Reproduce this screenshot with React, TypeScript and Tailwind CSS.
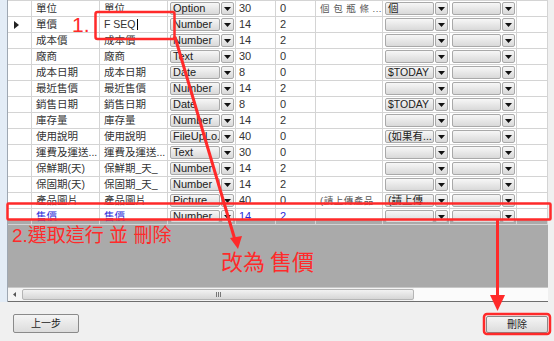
import React from 'react';

type Row = {
  name: string;
  field: string;
  type: string;
  len: string;
  dec: string;
  note?: string;
  def?: string;
  blue?: boolean;
  cursor?: boolean;
  current?: boolean;
};

const rows: Row[] = [
  { name: '單位', field: '單位', type: 'Option', len: '30', dec: '0', note: '個 包 瓶 條 ...', def: '個' },
  { name: '單價', field: 'F SEQ', type: 'Number', len: '14', dec: '2', cursor: true, current: true },
  { name: '成本價', field: '成本價', type: 'Number', len: '14', dec: '2' },
  { name: '廠商', field: '廠商', type: 'Text', len: '30', dec: '0' },
  { name: '成本日期', field: '成本日期', type: 'Date', len: '8', dec: '0', def: '$TODAY' },
  { name: '最近售價', field: '最近售價', type: 'Number', len: '14', dec: '2' },
  { name: '銷售日期', field: '銷售日期', type: 'Date', len: '8', dec: '0', def: '$TODAY' },
  { name: '庫存量', field: '庫存量', type: 'Number', len: '14', dec: '2' },
  { name: '使用說明', field: '使用說明', type: 'FileUpLo...', len: '40', dec: '0', def: '(如果有...' },
  { name: '運費及運送...', field: '運費及運送...', type: 'Text', len: '30', dec: '0' },
  { name: '保鮮期(天)', field: '保鮮期_天_', type: 'Number', len: '14', dec: '2' },
  { name: '保固期(天)', field: '保固期_天_', type: 'Number', len: '14', dec: '2' },
  { name: '產品圖片', field: '產品圖片', type: 'Picture', len: '40', dec: '0', note: '(請上傳產品...', def: '(請上傳...' },
  { name: '售價', field: '售價', type: 'Number', len: '14', dec: '2', blue: true },
];

const cols = 'grid grid-cols-[24px_68px_68px_68px_40px_40px_67px_67px_67px_1fr]';

const Arrow = () => (
  <svg width="7" height="4" viewBox="0 0 7 4">
    <polygon points="0,0 7,0 3.5,4" fill="#111" />
  </svg>
);

const Combo = ({ text }: { text?: string }) => (
  <div className="flex h-full w-full py-[1px] pl-[2px] pr-[1px] gap-[1px]">
    <div className="flex-1 min-w-0 flex items-center px-[2px] overflow-hidden whitespace-nowrap border border-[#a9a9a9] rounded-[2px] bg-linear-to-b from-[#f7f7f7] to-[#d9d9d9] text-[#222]">
      {text}
    </div>
    <div className="w-[13px] flex items-center justify-center border border-[#a9a9a9] rounded-[2px] bg-linear-to-b from-[#f7f7f7] to-[#d9d9d9]">
      <Arrow />
    </div>
  </div>
);

const Cell = ({ children, className = '' }: { children?: React.ReactNode; className?: string }) => (
  <div className={`min-w-0 border-r border-b border-[#d4d4d4] flex items-center overflow-hidden whitespace-nowrap ${className}`}>
    {children}
  </div>
);

export default function App() {
  return (
    <div
      className="w-[554px] h-[341px] relative overflow-hidden bg-[#f0f0f0] text-[11px] leading-none"
      style={{ fontFamily: '"Liberation Sans", "Noto Sans CJK TC", sans-serif' }}
    >
      <div className="flex h-[302px]">
        <div className="w-[8px] bg-[#e3ecf6] border-r border-[#9ea7b2]" />
        <div className="w-[540px] flex flex-col bg-[#aaaaaa]">
          {/* grid */}
          <div className="h-[219px] bg-white flex flex-col">
            <div className={`${cols} h-[3px]`}>
              {Array.from({ length: 10 }).map((_, i) => (
                <div key={i} className="border-r border-b border-[#d4d4d4]" />
              ))}
            </div>
            <div className="flex-1 grid grid-rows-[repeat(14,1fr)]">
              {rows.map((r, i) => {
                const tc = r.blue ? 'text-[#2a2ad8]' : 'text-[#333]';
                return (
                  <div key={i} className={cols}>
                    <Cell className="pl-[6px]">
                      {r.current && (
                        <svg width="5" height="8" viewBox="0 0 5 8">
                          <polygon points="0,0 5,4 0,8" fill="#222" />
                        </svg>
                      )}
                    </Cell>
                    <Cell className={`pl-[4px] text-[10.5px] ${tc}`}>{r.name}</Cell>
                    <Cell className={`pl-[4px] text-[10.5px] ${tc}`}>
                      {r.field}
                      {r.cursor && <span className="ml-[1px] w-[1px] h-[11px] bg-black" />}
                    </Cell>
                    <Cell>
                      <Combo text={r.type} />
                    </Cell>
                    <Cell className={`pl-[3px] ${tc}`}>{r.len}</Cell>
                    <Cell className={`pl-[4px] ${tc}`}>{r.dec}</Cell>
                    <Cell className="pl-[4px] text-[9.5px] text-[#555] tracking-[0.5px]">{r.note}</Cell>
                    <Cell className="text-[10.5px]">
                      <Combo text={r.def} />
                    </Cell>
                    <Cell>
                      <Combo />
                    </Cell>
                    <Cell />
                  </div>
                );
              })}
            </div>
          </div>
          <div className="flex-1" />
          {/* horizontal scrollbar */}
          <div className="h-[15px] flex items-stretch bg-[#f4f4f4] border-t border-[#c8c8c8] border-b border-b-[#6e6e6e]">
            <div className="w-[13px] flex items-center justify-center">
              <svg width="3" height="5" viewBox="0 0 3 5">
                <polygon points="3,0 0,2.5 3,5" fill="#555" />
              </svg>
            </div>
            <div className="w-[392px] my-[1px] ml-[1px] rounded-[2px] border border-[#b5b5b5] bg-linear-to-b from-[#f2f2f2] to-[#d6d6d6] flex items-center justify-center">
              <div className="flex gap-[1px]">
                <div className="w-[1px] h-[5px] bg-[#777]" />
                <div className="w-[1px] h-[5px] bg-[#777]" />
                <div className="w-[1px] h-[5px] bg-[#777]" />
              </div>
            </div>
            <div className="flex-1 bg-[#fbfbfb]" />
          </div>
        </div>
        <div className="flex-1 bg-[#f0f0f0]" />
      </div>

      {/* bottom buttons */}
      <div className="flex justify-between items-start pl-[13px] pr-[6px] pt-[12px]">
        <div className="w-[66px] h-[19px] flex items-center justify-center text-[10px] text-[#222] border border-[#8a8a8a] rounded-[2px] bg-linear-to-b from-[#f5f5f5] to-[#dcdcdc]">
          上一步
        </div>
        <div className="w-[62px] h-[17px] mt-[2px] flex items-center justify-center text-[10px] text-[#222] border border-[#8a8a8a] rounded-[2px] bg-linear-to-b from-[#f5f5f5] to-[#dcdcdc]">
          刪除
        </div>
      </div>

      {/* annotations */}
      <svg className="absolute inset-0 pointer-events-none" width="554" height="341" viewBox="0 0 554 341">
        <rect x="95.5" y="12" width="79" height="27" rx="2" fill="none" stroke="#ff2a2a" strokeWidth="2.5" />
        <rect x="7.5" y="203.5" width="543" height="16" rx="1" fill="none" stroke="#ff2a2a" strokeWidth="2.5" />
        <line x1="175" y1="37" x2="235" y2="240" stroke="#ff2a2a" strokeWidth="3" />
        <polygon points="230,238 242,236 238,249" fill="#ff2a2a" />
        <line x1="497.5" y1="220" x2="497.5" y2="298" stroke="#ff2a2a" strokeWidth="3" />
        <polygon points="490,295 505,295 497.5,311" fill="#ff2a2a" />
        <rect x="484" y="314" width="66" height="20" rx="3" fill="none" stroke="#ff2a2a" strokeWidth="2.5" />
      </svg>
      <div className="absolute left-[72px] top-[14px] text-[21px] text-[#ff2a2a]" style={{ fontFamily: '"Liberation Sans", sans-serif' }}>
        1.
      </div>
      <div
        className="absolute left-[12px] top-[226px] text-[19px] text-[#ff2a2a] whitespace-nowrap"
        style={{ fontFamily: '"Liberation Sans", "Noto Sans CJK TC", sans-serif' }}
      >
        2.選取這行 並 刪除
      </div>
      <div
        className="absolute left-[221px] top-[249px] text-[22px] text-[#ff2a2a] whitespace-nowrap"
        style={{ fontFamily: '"Noto Sans CJK TC", sans-serif' }}
      >
        改為 售價
      </div>
    </div>
  );
}
